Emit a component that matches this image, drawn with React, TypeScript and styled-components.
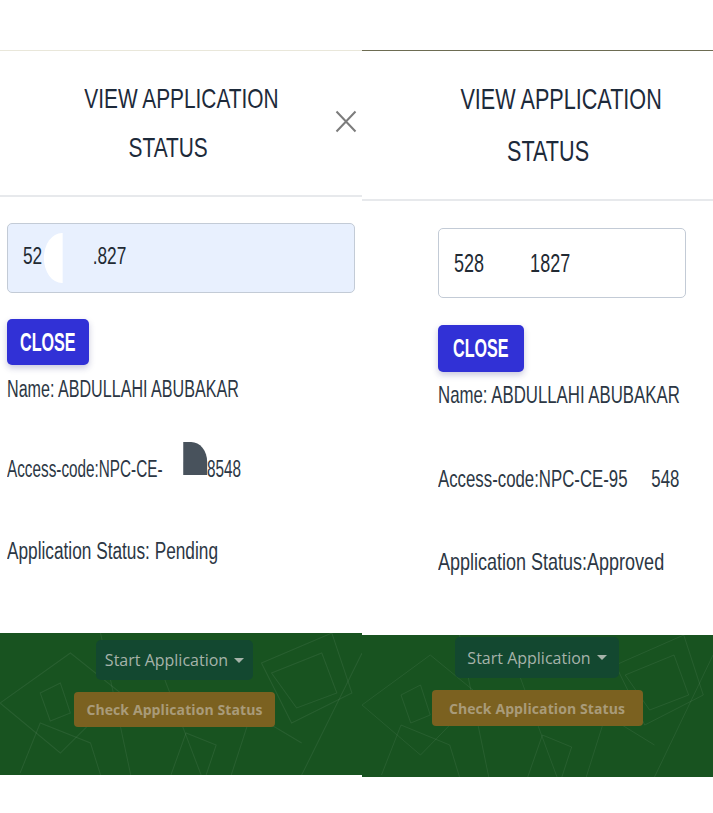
import React from "react";
import styled, { createGlobalStyle } from "styled-components";

const GlobalStyle = createGlobalStyle`
  html, body {
    margin: 0;
    padding: 0;
    background: #ffffff;
  }
  * {
    box-sizing: border-box;
  }
`;

const sans = `"Liberation Sans", Arial, sans-serif`;
const footerFont = `"Open Sans", "Liberation Sans", sans-serif`;

const Page = styled.div`
  display: flex;
  align-items: flex-start;
  width: 713px;
  height: 813px;
  padding-top: 50px;
  background: #ffffff;
  overflow: hidden;
  font-family: ${sans};
`;

const Panel = styled.section<{ $width: number; $line: string }>`
  width: ${(p) => p.$width}px;
  flex-shrink: 0;
  display: flex;
  flex-direction: column;
  border-top: 1px solid ${(p) => p.$line};
  background: #ffffff;
`;

// the app uses a narrow face; squeeze the nearest installed one
const Squeeze = styled.span<{ $sx: number; $origin?: string; $nudge?: number }>`
  display: inline-block;
  white-space: nowrap;
  margin-right: ${(p) => p.$nudge ?? 0}px;
  transform: scaleX(${(p) => p.$sx});
  transform-origin: ${(p) => p.$origin ?? "left"} center;
`;

const Header = styled.header<{ $height: number; $offset: number }>`
  position: relative;
  height: ${(p) => p.$height}px;
  display: flex;
  align-items: center;
  justify-content: center;
  padding-left: ${(p) => p.$offset}px;
  border-bottom: 2px solid #e7e9ec;
`;

const Title = styled.h2<{ $size: number; $lh: number }>`
  margin: 0;
  display: flex;
  flex-direction: column;
  align-items: center;
  font-size: ${(p) => p.$size}px;
  line-height: ${(p) => p.$lh}px;
  font-weight: 400;
  color: #1d2a3a;
`;

const CloseX = styled.button`
  position: absolute;
  right: 5px;
  top: 59px;
  width: 22px;
  height: 23px;
  padding: 0;
  border: 0;
  background: none;
  cursor: pointer;
  svg {
    display: block;
  }
`;

const Body = styled.div<{
  $height: number;
  $top: number;
  $left: number;
  $width: number;
}>`
  height: ${(p) => p.$height}px;
  display: flex;
  flex-direction: column;
  align-items: flex-start;
  padding: ${(p) => p.$top}px 0 0 ${(p) => p.$left}px;
  --field-width: ${(p) => p.$width}px;
`;

const Field = styled.div<{ $autofill: boolean; $size: number }>`
  width: var(--field-width);
  height: 70px;
  flex-shrink: 0;
  display: flex;
  align-items: center;
  padding-left: 15px;
  border: 1px solid #c3cbd6;
  border-radius: 5px;
  background: ${(p) => (p.$autofill ? "#e8f0fe" : "#ffffff")};
  font-size: ${(p) => p.$size}px;
  color: #222a33;
`;

const Gap = styled.span<{ $w: number }>`
  display: inline-block;
  width: ${(p) => p.$w}px;
  vertical-align: middle;
`;

// white smudge left over from blurring the number in the original shot
const Blot = styled.span`
  display: block;
  width: 26px;
  height: 50px;
  margin-left: 2px;
  background: #ffffff;
  border-radius: 26px 0 0 26px;
`;

const CloseButton = styled.button<{ $w: number; $h: number; $top: number }>`
  margin-top: ${(p) => p.$top}px;
  width: ${(p) => p.$w}px;
  height: ${(p) => p.$h}px;
  flex-shrink: 0;
  padding: 0;
  border: 0;
  border-radius: 5px;
  background: #3131d6;
  color: #ffffff;
  font-family: ${sans};
  font-size: 26px;
  font-weight: 700;
  box-shadow: 0 3px 6px rgba(40, 40, 120, 0.25);
  cursor: pointer;
  display: flex;
  align-items: center;
  justify-content: center;
`;

const Info = styled.p<{ $top: number; $size: number }>`
  margin: ${(p) => p.$top}px 0 0 0;
  font-size: ${(p) => p.$size}px;
  line-height: 30px;
  color: #2c3744;
  white-space: nowrap;
`;

// dark block hiding part of the access code; negative top margin keeps the line box height
const Redacted = styled.span`
  display: inline-block;
  width: 36px;
  height: 33px;
  margin: -14px 0 2px 31px;
  background: #48525c;
  border-top-right-radius: 24px 20px;
  vertical-align: baseline;
`;

const Footer = styled.footer<{ $shift: number; $top: number }>`
  position: relative;
  height: 142px;
  overflow: hidden;
  background: #185320;
  display: flex;
  flex-direction: column;
  align-items: center;
  gap: 12px;
  padding: ${(p) => p.$top}px ${(p) => p.$shift}px 0 0;
`;

const Pattern = styled.svg`
  position: absolute;
  inset: 0;
  width: 100%;
  height: 100%;
`;

const StartButton = styled.button<{ $w: number; $h: number }>`
  position: relative;
  width: ${(p) => p.$w}px;
  height: ${(p) => p.$h}px;
  border: 0;
  border-radius: 5px;
  background: #134830;
  color: #a6b3aa;
  font-family: ${footerFont};
  font-size: 16px;
  display: flex;
  align-items: center;
  justify-content: center;
  gap: 6px;
`;

const Caret = styled.span`
  width: 0;
  height: 0;
  border-left: 5px solid transparent;
  border-right: 5px solid transparent;
  border-top: 5px solid #a6b3aa;
`;

const CheckButton = styled.button<{ $w: number; $h: number }>`
  position: relative;
  width: ${(p) => p.$w}px;
  height: ${(p) => p.$h}px;
  border: 0;
  border-radius: 4px;
  background: #7b6120;
  color: #a99b79;
  font-family: ${footerFont};
  font-size: 14px;
  font-weight: 700;
  letter-spacing: 0.1px;
`;

const Blueprint = () => (
  <Pattern viewBox="0 0 360 142" preserveAspectRatio="none" aria-hidden>
    <g stroke="rgba(255,255,255,0.07)" strokeWidth="1" fill="none">
      <path d="M0 70 L70 20 L120 60 L60 120 Z" />
      <path d="M20 140 L40 90 L90 110 L100 142" />
      <path d="M100 0 L130 142" />
      <path d="M150 10 L200 142" />
      <path d="M260 30 L330 0 L350 60 L290 90 Z" />
      <path d="M270 40 L320 20 L335 60 L295 75 Z" />
      <path d="M300 142 L360 20" />
      <path d="M230 142 L250 80 L300 110" />
      <path d="M40 60 L60 50 L70 80 L50 88 Z" />
      <path d="M170 142 L185 100 L215 112 L205 142" />
    </g>
  </Pattern>
);

interface PanelData {
  width: number;
  line: string;
  headerHeight: number;
  headerOffset: number;
  titleSize: number;
  titleLine: number;
  showX: boolean;
  bodyHeight: number;
  bodyTop: number;
  bodyLeft: number;
  fieldWidth: number;
  autofill: boolean;
  digitsA: string;
  gap: number;
  blot: boolean;
  digitsB: string;
  closeTop: number;
  closeSize: [number, number];
  textSize: number;
  infoTops: [number, number, number];
  codeHead: string;
  codeTail: string;
  codeScale: number;
  redacted: boolean;
  codeGap: number;
  status: string;
  footerTop: number;
  footerShift: number;
  start: [number, number];
  check: [number, number];
}

const panels: PanelData[] = [
  {
    width: 362,
    line: "#e9e7da",
    headerHeight: 146,
    headerOffset: 0,
    titleSize: 28,
    titleLine: 49,
    showX: true,
    bodyHeight: 436,
    bodyTop: 26,
    bodyLeft: 7,
    fieldWidth: 348,
    autofill: true,
    digitsA: "52",
    gap: 70,
    blot: true,
    digitsB: ".827",
    closeTop: 26,
    closeSize: [82, 46],
    textSize: 23,
    infoTops: [9, 50, 52],
    codeHead: "Access-code:NPC-CE-",
    codeTail: "8548",
    codeScale: 0.665,
    redacted: true,
    codeGap: 0,
    status: "Application Status: Pending",
    footerTop: 7,
    footerShift: 13,
    start: [157, 40],
    check: [201, 35],
  },
  {
    width: 351,
    line: "#6d6c52",
    headerHeight: 150,
    headerOffset: 47,
    titleSize: 29,
    titleLine: 52,
    showX: false,
    bodyHeight: 434,
    bodyTop: 27,
    bodyLeft: 76,
    fieldWidth: 248,
    autofill: false,
    digitsA: "528",
    gap: 64,
    blot: false,
    digitsB: "1827",
    closeTop: 27,
    closeSize: [86, 47],
    textSize: 24,
    infoTops: [8, 54, 53],
    codeHead: "Access-code:NPC-CE-95",
    codeTail: "548",
    codeScale: 0.7,
    redacted: false,
    codeGap: 34,
    status: "Application Status:Approved",
    footerTop: 2,
    footerShift: 1,
    start: [164, 41],
    check: [211, 36],
  },
];

const StatusPanel: React.FC<{ data: PanelData }> = ({ data }) => (
  <Panel $width={data.width} $line={data.line}>
    <Header $height={data.headerHeight} $offset={data.headerOffset}>
      <Title $size={data.titleSize} $lh={data.titleLine}>
        <Squeeze $sx={0.745} $origin="center">
          VIEW APPLICATION
        </Squeeze>
        <Squeeze $sx={0.745} $origin="center" $nudge={25}>
          STATUS
        </Squeeze>
      </Title>
      {data.showX && (
        <CloseX aria-label="Close">
          <svg width="22" height="23" viewBox="0 0 22 23">
            <path
              d="M1.5 1.5 L20.5 21.5 M20.5 1.5 L1.5 21.5"
              stroke="#7c7c7c"
              strokeWidth="2"
              fill="none"
            />
          </svg>
        </CloseX>
      )}
    </Header>
    <Body
      $height={data.bodyHeight}
      $top={data.bodyTop}
      $left={data.bodyLeft}
      $width={data.fieldWidth}
    >
      <Field $autofill={data.autofill} $size={data.textSize + 1}>
        <Squeeze $sx={0.72}>
          {data.digitsA}
          <Gap $w={data.gap}>{data.blot && <Blot />}</Gap>
          {data.digitsB}
        </Squeeze>
      </Field>
      <CloseButton
        $top={data.closeTop}
        $w={data.closeSize[0]}
        $h={data.closeSize[1]}
      >
        <Squeeze $sx={0.62} $origin="center">
          CLOSE
        </Squeeze>
      </CloseButton>
      <Info $top={data.infoTops[0]} $size={data.textSize}>
        <Squeeze $sx={0.7}>Name: ABDULLAHI ABUBAKAR</Squeeze>
      </Info>
      <Info $top={data.infoTops[1]} $size={data.textSize}>
        <Squeeze $sx={data.codeScale}>
          {data.codeHead}
          {data.redacted ? <Redacted /> : <Gap $w={data.codeGap} />}
          {data.codeTail}
        </Squeeze>
      </Info>
      <Info $top={data.infoTops[2]} $size={data.textSize}>
        <Squeeze $sx={0.75}>{data.status}</Squeeze>
      </Info>
    </Body>
    <Footer $top={data.footerTop} $shift={data.footerShift}>
      <Blueprint />
      <StartButton $w={data.start[0]} $h={data.start[1]}>
        Start Application <Caret />
      </StartButton>
      <CheckButton $w={data.check[0]} $h={data.check[1]}>
        Check Application Status
      </CheckButton>
    </Footer>
  </Panel>
);

export default function App() {
  return (
    <>
      <GlobalStyle />
      <Page>
        {panels.map((p, i) => (
          <StatusPanel key={i} data={p} />
        ))}
      </Page>
    </>
  );
}
